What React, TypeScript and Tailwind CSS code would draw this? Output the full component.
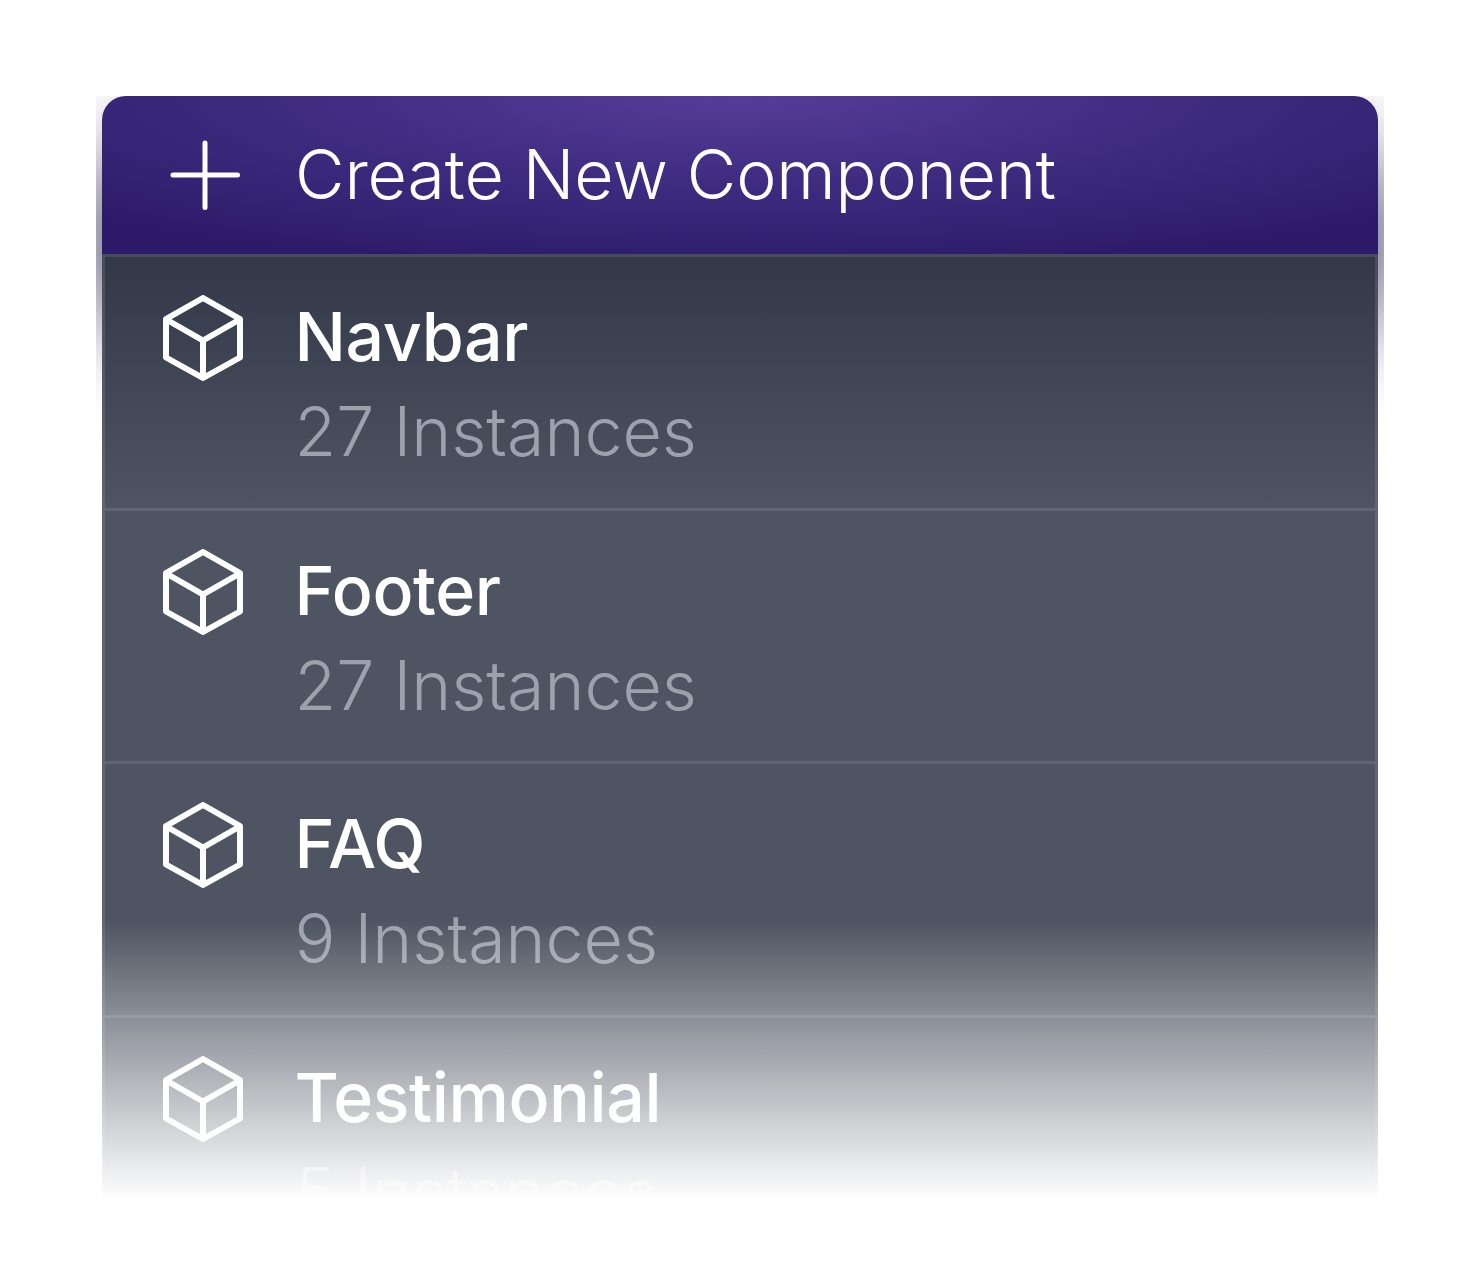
const rows = [
  { name: "Navbar", count: "27 Instances" },
  { name: "Footer", count: "27 Instances" },
  { name: "FAQ", count: "9 Instances" },
  { name: "Testimonial", count: "5 Instances" },
];

function Cube() {
  return (
    <svg width="80" height="86" viewBox="0 0 80 86" fill="none" stroke="white" strokeWidth="6" strokeLinejoin="round" strokeLinecap="round" className="shrink-0">
      <path d="M40 3 L77 24 V62.5 L40 83 L3 62.5 V24 Z" />
      <path d="M5 25.5 L40 45.5 L75 25.5 M40 45.5 V81" />
    </svg>
  );
}

function Plus() {
  return (
    <svg width="74" height="74" viewBox="0 0 74 74" fill="none" stroke="white" strokeWidth="5" strokeLinecap="round" className="shrink-0">
      <path d="M37 5 V69.5 M5 37 H69.5" />
    </svg>
  );
}

export default function App() {
  return (
    <div className="h-[1268px] bg-white pt-[96px] px-[96px] font-['Inter',sans-serif]">
      <div className="relative h-[1104px] overflow-hidden">
        <div className="mx-[6px] h-[1200px]">
          <div className="h-[158px] flex items-center pl-[66px] gap-[53px] rounded-t-[24px] shadow-[0_65px_100px_#221c4c] bg-[radial-gradient(ellipse_900px_175px_at_50%_0%,#563c99_0%,#3c2a7e_55%,#2d1b69_100%)]">
            <Plus />
            <span className="text-[68px] leading-none font-light tracking-[-0.1px] text-white -translate-y-px">Create New Component</span>
          </div>
          <div className="relative bg-[linear-gradient(180deg,#333849_0px,#4e5461_252px,#4e5461_100%)]">
            {rows.map((r) => (
              <div key={r.name} className="h-[253.5px] flex items-start pl-[58px] gap-[51.5px] border-x-[3px] border-t-[3px] border-white/10">
                <div className="pt-[38px]"><Cube /></div>
                <div className="pt-[41px]">
                  <div className="text-[68px] leading-[77px] font-medium tracking-[-0.4px] text-white">{r.name}</div>
                  <div className="text-[68px] leading-[77px] mt-[18px] font-light text-[#9da1ac]">{r.count}</div>
                </div>
              </div>
            ))}
          </div>
        </div>
        <div className="absolute inset-x-0 bottom-0 h-[280px] bg-[linear-gradient(180deg,rgba(255,255,255,0)_0%,rgba(255,255,255,1)_100%)]" />
      </div>
    </div>
  );
}
